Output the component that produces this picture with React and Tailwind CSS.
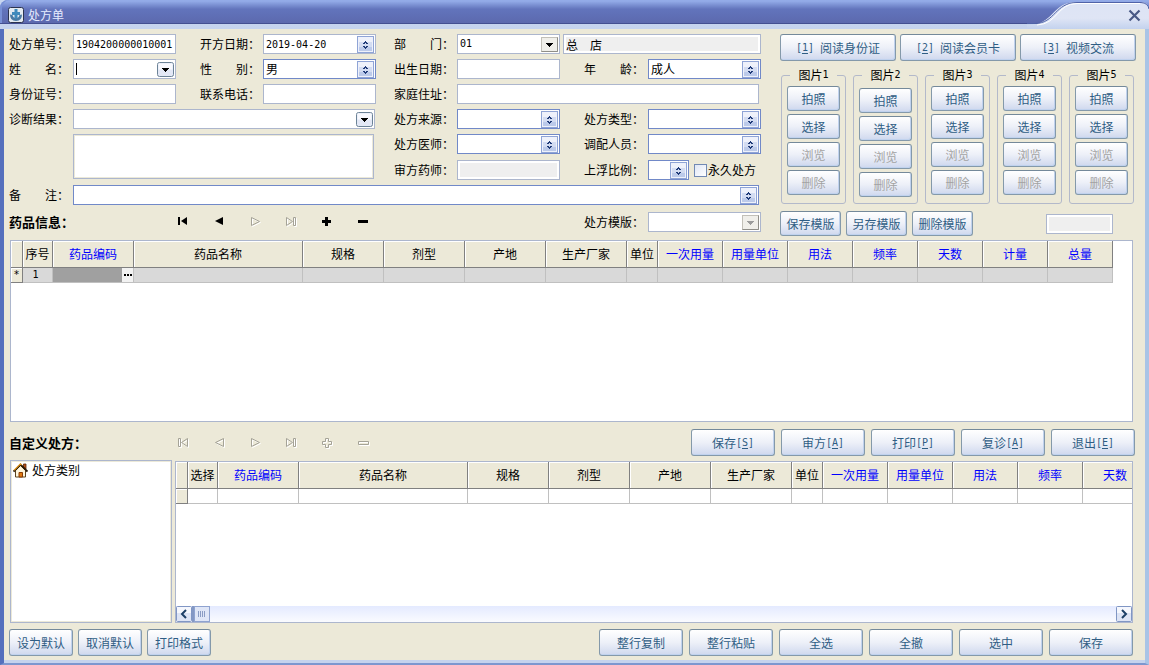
import React from 'react';

const MONO = "font-['DejaVu_Sans_Mono',monospace] text-[10px]";

function Button({ children, className = '', disabled = false }) {
  return (
    <button
      type="button"
      disabled={disabled}
      className={`flex items-center justify-center whitespace-nowrap rounded-[3px] border border-[#8499aa] border-t-[#74899a] bg-linear-to-b from-white via-[#edf0f8] to-[#cfd8ee] leading-none text-[#2f5d84] shadow-[inset_-1px_-1px_0_#c0d2ee] disabled:text-[#a3a3a3] ${className}`}
    >
      {children}
    </button>
  );
}

function Key({ letter, children }) {
  return (
    <span className={MONO}>
      [<u className="underline-offset-2">{letter}</u>]{children}
    </span>
  );
}

function UpDown() {
  return (
    <svg viewBox="0 0 17 17" className="h-[17px] w-[17px]" shapeRendering="crispEdges" aria-hidden="true">
      <rect x="0" y="0" width="17" height="17" fill="#8fa4d6" />
      <rect x="1" y="1" width="15" height="15" fill="#eef1fb" />
      <rect x="2" y="6" width="13" height="9" fill="#d3dcf2" />
      <rect x="2" y="11" width="13" height="4" fill="#bccaea" />
      <path d="M8 5h1v1h1v1h1v1h-2v-1h-1v1h-2v-1h1v-1h1zM6 10h2v1h1v-1h2v1h-1v1h-1v1h-1v-1h-1v-1h-1z" fill="#1f3a78" />
    </svg>
  );
}

function ArrowDown({ kind }) {
  const round = kind === 'round';
  const off = kind === 'disabled';
  return (
    <svg viewBox="0 0 17 15" className="h-[15px] w-[17px]" aria-hidden="true">
      <rect
        x="0.5"
        y="0.5"
        width="16"
        height="14"
        rx={round ? 2 : 0}
        fill={round ? '#e3e8f6' : '#f0efea'}
        stroke={round ? '#6c8397' : '#c2c0b8'}
      />
      {round && <rect x="1.5" y="1.5" width="14" height="6" fill="#f8f9fe" />}
      {!round && <path d="M0.5 14.5h16v-14" fill="none" stroke="#8f8e88" />}
      <path d="M5 6h7v1h-1v1h-1v1h-1v1h-1v-1h-1v-1h-1v-1h-1z" fill={off ? '#9c9c9c' : '#000'} shapeRendering="crispEdges" />
    </svg>
  );
}

function Label({ htmlFor, children, className = '' }) {
  return (
    <label htmlFor={htmlFor} className={`self-center whitespace-pre leading-5 ${className}`}>
      {children}
    </label>
  );
}

function Text({ id, className = '', mono = false, caret = false, icon, ...rest }) {
  return (
    <div className={`flex h-5 min-w-0 items-center border border-[#acb6cd] bg-white pl-[2px] ${className}`}>
      {caret && <span className="h-3 w-px bg-black" />}
      <input
        id={id}
        type="text"
        className={`h-full w-full min-w-0 flex-1 bg-transparent outline-none ${mono ? MONO : ''}`}
        {...rest}
      />
      {icon && (
        <button type="button" aria-label="展开" className="mr-px shrink-0">
          {icon}
        </button>
      )}
    </div>
  );
}

function ReadOnly({ id, value = '', className = '', label }) {
  return (
    <div className={`h-5 border border-[#acb6cd] bg-white p-[2px] ${className}`}>
      <input
        id={id}
        aria-label={label}
        readOnly
        value={value}
        className="block h-full w-full bg-[#efefef] leading-none outline-none"
      />
    </div>
  );
}

function Select({ id, value = '', mono = false, plain = false, disabled = false, icon = <UpDown />, className = '' }) {
  return (
    <div
      className={`grid h-5 min-w-0 items-center border bg-white ${plain ? 'border-[#acb6cd]' : 'border-[#7189c8]'} ${className}`}
    >
      <select
        id={id}
        disabled={disabled}
        defaultValue={value}
        className={`col-start-1 row-start-1 h-full w-full min-w-0 appearance-none bg-transparent pl-[2px] leading-none outline-none ${mono ? MONO : ''}`}
      >
        <option value={value}>{value}</option>
      </select>
      <span className="pointer-events-none col-start-1 row-start-1 mr-px justify-self-end">{icon}</span>
    </div>
  );
}

const NAV = [
  { label: '首条', d: 'M1 1h2v8h-2zM4 5l6 -4v8z' },
  { label: '上一条', d: 'M2 5l8 -4v8z' },
  { label: '下一条', d: 'M2 1l8 4l-8 4z' },
  { label: '末条', d: 'M1 1l6 4l-6 4zM8 1h2v8h-2z' },
  { label: '新增', d: 'M4 1h3v3h3v3h-3v3h-3v-3h-3v-3h3z' },
  { label: '删除', d: 'M1 4h10v3h-10z' },
];

function Navigator({ enabled }) {
  return (
    <div className="flex">
      {NAV.map((item, i) => {
        const on = enabled.includes(i);
        return (
          <button key={item.label} type="button" aria-label={item.label} disabled={!on} className="flex w-9 justify-center py-1">
            <svg viewBox="0 0 13 12" className="h-3 w-[13px]" aria-hidden="true">
              {on ? (
                <path d={item.d} fill="#000" />
              ) : (
                <>
                  <path d={item.d} transform="translate(1.5 1.5)" fill="none" stroke="#fff" />
                  <path d={item.d} transform="translate(0.5 0.5)" fill="none" stroke="#a5a397" />
                </>
              )}
            </svg>
          </button>
        );
      })}
    </div>
  );
}

const DRUG_COLUMNS = [
  ['药品编码', 'w-[81px]', true],
  ['药品名称', 'w-[169px]', false],
  ['规格', 'w-[81px]', false],
  ['剂型', 'w-[81px]', false],
  ['产地', 'w-[81px]', false],
  ['生产厂家', 'w-[81px]', false],
  ['单位', 'w-[31px]', false],
  ['一次用量', 'w-[65px]', true],
  ['用量单位', 'w-[65px]', true],
  ['用法', 'w-[65px]', true],
  ['频率', 'w-[65px]', true],
  ['天数', 'w-[65px]', true],
];
const MAIN_COLUMNS = [['序号', 'w-[30px]', false], ...DRUG_COLUMNS, ['计量', 'w-[65px]', true], ['总量', 'w-[65px]', true]];
const CUSTOM_COLUMNS = [['选择', 'w-[30px]', false], ...DRUG_COLUMNS];

const HEAD = 'h-[27px] overflow-hidden whitespace-nowrap border-b border-r border-[#808080] bg-[#ece9d8] p-0 text-center font-normal shadow-[inset_1px_1px_0_#fff]';

function HeadRow({ columns }) {
  return (
    <thead>
      <tr>
        <th className={`w-3 ${HEAD}`} aria-label="行标" />
        {columns.map(([name, width, editable]) => (
          <th key={name} scope="col" className={`${width} ${HEAD} ${editable ? 'text-[#0000ff]' : 'text-black'}`}>
            {name}
          </th>
        ))}
      </tr>
    </thead>
  );
}

const MARK = 'h-[15px] border-b border-r border-[#808080] bg-[#ece9d8] p-0 text-center leading-none shadow-[inset_1px_1px_0_#fff]';

function MainTable() {
  return (
    <table className="w-0 table-fixed border-separate border-spacing-0">
      <HeadRow columns={MAIN_COLUMNS} />
      <tbody>
        <tr>
          <td className={`${MARK} ${MONO}`}>*</td>
          {MAIN_COLUMNS.map(([name], i) => (
            <td
              key={name}
              className={`h-[15px] border-b border-r border-[#c0c0c0] p-0 leading-none ${i === 1 ? 'bg-[#a0a0a0]' : 'bg-[#d9d9d9]'}`}
            >
              {i === 0 && <span className={`block pr-1 text-center ${MONO}`}>1</span>}
              {i === 1 && (
                <button type="button" aria-label="选择药品" className="ml-auto flex h-[14px] w-[11px] items-center justify-center bg-[#f2f2f2]">
                  <svg viewBox="0 0 8 2" className="h-[2px] w-2" aria-hidden="true">
                    <path d="M0 0h2v2h-2zM3 0h2v2h-2zM6 0h2v2h-2z" fill="#000" />
                  </svg>
                </button>
              )}
            </td>
          ))}
        </tr>
      </tbody>
    </table>
  );
}

function CustomTable() {
  return (
    <table className="w-0 table-fixed border-separate border-spacing-0">
      <HeadRow columns={CUSTOM_COLUMNS} />
      <tbody>
        <tr>
          <td className={MARK} />
          {CUSTOM_COLUMNS.map(([name]) => (
            <td key={name} className="h-[15px] border-b border-r border-[#c0c0c0] bg-white p-0" />
          ))}
        </tr>
      </tbody>
    </table>
  );
}

function ScrollButton({ label, d }) {
  return (
    <button type="button" aria-label={label} className="size-4 shrink-0">
      <svg viewBox="0 0 16 16" className="size-4" aria-hidden="true">
        <rect x="0.5" y="0.5" width="15" height="15" rx="1" fill="#dde4f5" stroke="#8096c4" />
        <rect x="1" y="1" width="14" height="6" fill="#f5f7fd" />
        <path d={d} fill="none" stroke="#1c3f66" strokeWidth="2" />
      </svg>
    </button>
  );
}

function ScrollBar() {
  return (
    <div className="flex h-4 bg-linear-to-b from-[#e4eaff] to-[#fafbff]">
      <ScrollButton label="向左滚动" d="M10 4l-4 4l4 4" />
      <span className="w-[2px] bg-[#8398c4]" />
      <svg viewBox="0 0 16 16" className="size-4" aria-hidden="true">
        <rect x="0.5" y="0.5" width="15" height="15" fill="#dfe6f7" stroke="#8fa3d0" />
        <path d="M4.5 5v6M6.5 5v6M8.5 5v6M10.5 5v6" stroke="#8a9cc4" />
      </svg>
      <span className="flex-1" />
      <ScrollButton label="向右滚动" d="M6 4l4 4l-4 4" />
    </div>
  );
}

function HouseIcon() {
  return (
    <svg viewBox="0 0 15 15" className="size-[15px]" aria-hidden="true">
      <path d="M10.5 1h2.500v5h-2.500z" fill="#b8501a" stroke="#5a2a08" strokeWidth="0.8" />
      <path d="M2.5 7.5L7.5 2.5L12.5 7.5V14H2.5z" fill="#fff6dc" stroke="#5a4420" />
      <path d="M0.5 8.5L7.5 1.500L14.5 8.5" fill="none" stroke="#2a1a08" strokeWidth="1.800" />
      <path d="M1 7.4L7.5 0.9L8.500 2" fill="none" stroke="#f0a020" strokeWidth="1.2" />
      <path d="M6 9.5h3.500V14h-3.500z" fill="#e07810" stroke="#8a3c04" />
    </svg>
  );
}

function TitleBar() {
  return (
    <header className="relative h-[29px] shrink-0 bg-linear-to-b from-[#c9d6f0] to-[#c5d3ee]">
      <div className="flex h-6 items-center gap-1 rounded-tl-lg border-b border-[#434f91] bg-linear-to-b from-[#93abe8] from-5% via-[#6274bc] via-40% to-[#5c69ae] pl-2 pt-[6px] shadow-[inset_2px_0_0_#7890d6]">
        <svg viewBox="0 0 16 16" className="size-4" aria-hidden="true">
          <rect x="0.5" y="0.5" width="15" height="15" rx="2" fill="#e3eaf0" stroke="#2c3450" />
          <path d="M2 7.500q0 6.500 6 6.500t6 -6.500l-2.500 0.500q-0.500 3 -3.500 3t-3.500 -3z" fill="#4a7aa4" />
          <path d="M6.500 2h3v3h2.500v3h-2.500v3.500h-3v-3.500h-2.500v-3h2.500z" fill="#3f8abc" />
        </svg>
        <h1 className="leading-none text-[#e6ecff]">处方单</h1>
      </div>
      <div className="absolute right-0 top-0 flex h-[29px] w-[122px]">
        <svg viewBox="0 0 122 29" className="h-[29px] w-[122px]" aria-hidden="true">
          <defs>
            <linearGradient id="tab" x1="0" y1="0" x2="0" y2="1">
              <stop offset="0" stopColor="#dde4f5" />
              <stop offset="0.6" stopColor="#dfe5f5" />
              <stop offset="1" stopColor="#c3d2ee" />
            </linearGradient>
          </defs>
          <path d="M0 25C28 25 24 2 50 2H114Q121 2 122 9V29H0z" fill="url(#tab)" />
          <path d="M0 23.500H8C28 23.500 28 2.500 50 2.500H114Q121 3 122 9" fill="none" stroke="#5063a8" />
          <path d="M10 25C31 24 30 3.500 50 3.500H113" fill="none" stroke="#fff" />
        </svg>
      </div>
      <button type="button" aria-label="关闭" className="absolute right-2 top-[9px] size-[13px]">
        <svg viewBox="0 0 13 13" className="size-[13px]" aria-hidden="true">
          <path d="M1.500 1.500l10 10M11.500 1.500l-10 10" stroke="#4a5a86" strokeWidth="2.200" />
        </svg>
      </button>
    </header>
  );
}

function PictureGroup({ n }) {
  return (
    <fieldset className={`min-w-0 rounded-[3px] border border-[#b3b9ca] px-[5px] ${n === 2 ? 'pb-[6px] pt-[7px]' : 'pb-2 pt-[5px]'}`}>
      <legend className="mx-auto flex h-3 items-center whitespace-nowrap px-2 leading-3">
        图片<span className={MONO}>{n}</span>
      </legend>
      <div className="flex flex-col gap-[3px]">
        <Button className="h-[25px]">拍照</Button>
        <Button className="h-[25px]">选择</Button>
        <Button className="h-[25px]" disabled>浏览</Button>
        <Button className="h-[25px]" disabled>删除</Button>
      </div>
    </fieldset>
  );
}

function PrescriptionForm() {
  return (
    <form className="grid min-w-0 flex-1 grid-cols-[64px_103fr_87px_113fr_81px_103fr_88px_113fr] grid-rows-[20px_20px_20px_20px_20px_21px_20px] gap-y-[5px]">
      <Label htmlFor="no">处方单号：</Label>
      <Text id="no" mono defaultValue="1904200000010001" />
      <Label htmlFor="date" className="pl-6">开方日期：</Label>
      <Text id="date" mono defaultValue="2019-04-20" icon={<UpDown />} />
      <Label htmlFor="dept" className="pl-[18px]">部　　门：</Label>
      <Select id="dept" value="01" mono plain icon={<ArrowDown />} />
      <ReadOnly label="部门名称" value="总　店" className="col-span-2 ml-[3px]" />

      <Label htmlFor="name">姓　　名：</Label>
      <Text id="name" caret icon={<ArrowDown kind="round" />} />
      <Label htmlFor="sex" className="pl-6">性　　别：</Label>
      <Select id="sex" value="男" />
      <Label htmlFor="birth" className="pl-[18px]">出生日期：</Label>
      <Text id="birth" />
      <Label htmlFor="age" className="pl-6">年　　龄：</Label>
      <Select id="age" value="成人" />

      <Label htmlFor="idcard">身份证号：</Label>
      <Text id="idcard" />
      <Label htmlFor="phone" className="pl-6">联系电话：</Label>
      <Text id="phone" />
      <Label htmlFor="addr" className="pl-[18px]">家庭住址：</Label>
      <Text id="addr" className="col-span-3 mr-[2px]" />

      <Label htmlFor="diag">诊断结果：</Label>
      <Text id="diag" className="col-span-3 mr-px" icon={<ArrowDown kind="round" />} />
      <Label htmlFor="source" className="pl-[18px]">处方来源：</Label>
      <Select id="source" />
      <Label htmlFor="type" className="pl-6">处方类型：</Label>
      <Select id="type" />

      <textarea
        aria-label="诊断说明"
        className="col-span-3 col-start-2 row-span-2 row-start-5 mb-px mr-[2px] resize-none border border-[#acb6cd] bg-white p-1 shadow-[inset_0_0_0_1px_#ece9d8] outline-none"
      />
      <Label htmlFor="doctor" className="col-start-5 row-start-5 pl-[18px]">处方医师：</Label>
      <Select id="doctor" className="col-start-6 row-start-5" />
      <Label htmlFor="dispenser" className="col-start-7 row-start-5 pl-6">调配人员：</Label>
      <Select id="dispenser" className="col-start-8 row-start-5" />

      <Label htmlFor="auditor" className="col-start-5 row-start-6 pl-[18px]">审方药师：</Label>
      <ReadOnly id="auditor" className="col-start-6 row-start-6 self-end" />
      <Label htmlFor="ratio" className="col-start-7 row-start-6 pl-6">上浮比例：</Label>
      <div className="col-start-8 row-start-6 flex items-center self-end">
        <Select id="ratio" className="w-[41px] shrink-0" />
        <label className="ml-[5px] flex items-center gap-px whitespace-nowrap leading-none">
          <input
            type="checkbox"
            className="size-[13px] appearance-none border border-[#7189b4] bg-linear-to-br from-[#dfe6f5] to-white checked:bg-[#4a5a86]"
          />
          永久处方
        </label>
      </div>

      <Label htmlFor="note" className="col-start-1 row-start-7">备　　注：</Label>
      <Select id="note" className="col-span-7 col-start-2 row-start-7 mr-[2px]" />
    </form>
  );
}

export default function App() {
  return (
    <div className="flex min-h-screen flex-col bg-[#6b80c6] font-['Noto_Sans_CJK_SC',sans-serif] text-[12px] text-black">
      <TitleBar />
      <main className="flex flex-1 flex-col border-b-2 border-l-4 border-r-4 border-b-[#7d97cf] border-l-[#5570bd] border-r-[#a9c4e6] bg-[#ece9d8]">
        <div className="flex flex-1 flex-col pt-[5px]">
          <div className="flex gap-[19px] pl-[5px] pr-[9px]">
            <PrescriptionForm />
            <section className="flex w-[356px] shrink-0 flex-col gap-2">
              <div className="grid grid-cols-3 gap-1">
                <Button className="h-[27px]"><Key letter="1">&nbsp;</Key>阅读身份证</Button>
                <Button className="h-[27px]"><Key letter="2">&nbsp;</Key>阅读会员卡</Button>
                <Button className="h-[27px]"><Key letter="3">&nbsp;</Key>视频交流</Button>
              </div>
              <div className="grid grid-cols-5 gap-[7px] pl-px pr-[2px]">
                {[1, 2, 3, 4, 5].map((n) => (
                  <PictureGroup key={n} n={n} />
                ))}
              </div>
            </section>
          </div>

          <div className="mt-[6px] flex gap-[19px] pl-[5px] pr-[9px]">
            <div className="flex min-w-0 flex-1 items-center pb-[3px]">
              <h2 className="w-[156px] text-[13px] font-bold leading-5">药品信息：</h2>
              <Navigator enabled={[0, 1, 4, 5]} />
              <Label htmlFor="tpl" className="ml-auto">处方模版：</Label>
              <Select id="tpl" plain disabled icon={<ArrowDown kind="disabled" />} className="ml-1 w-[113px]" />
            </div>
            <div className="flex w-[356px] shrink-0 items-center gap-[5px]">
              <Button className="h-[25px] w-[61px]">保存模版</Button>
              <Button className="h-[25px] w-[61px]">另存模版</Button>
              <Button className="h-[25px] w-[61px]">删除模版</Button>
              <ReadOnly label="模版编号" className="ml-auto mr-[23px] w-[67px]" />
            </div>
          </div>

          <div className="ml-[6px] mr-3 mt-1 h-[182px] grow overflow-hidden border border-[#acb6cd] bg-white">
            <MainTable />
          </div>

          <div className="mt-[7px] flex items-center pl-[5px] pr-[10px]">
            <h2 className="w-[156px] text-[13px] font-bold leading-5">自定义处方：</h2>
            <Navigator enabled={[]} />
            <div className="ml-auto flex gap-[6px]">
              <Button className="h-[27px] w-[84px]">保存<Key letter="S" /></Button>
              <Button className="h-[27px] w-[84px]">审方<Key letter="A" /></Button>
              <Button className="h-[27px] w-[84px]">打印<Key letter="P" /></Button>
              <Button className="h-[27px] w-[84px]">复诊<Key letter="A" /></Button>
              <Button className="h-[27px] w-[84px]">退出<Key letter="E" /></Button>
            </div>
          </div>

          <div className="ml-[6px] mr-3 mt-1 flex h-[163px] gap-[3px]">
            <ul className="w-[162px] shrink-0 border border-[#acb6cd] bg-white shadow-[inset_0_0_0_1px_#ece9d8]">
              <li className="flex items-center gap-1 pl-[2px] pt-px leading-4">
                <HouseIcon />
                处方类别
              </li>
            </ul>
            <div className="mt-px flex min-w-0 flex-1 flex-col border border-[#acb6cd] bg-white">
              <div className="flex-1 overflow-hidden">
                <CustomTable />
              </div>
              <ScrollBar />
            </div>
          </div>

          <footer className="mb-1 mt-[6px] flex justify-between pl-[5px] pr-3">
            <div className="flex gap-[5px]">
              <Button className="h-[27px] w-16">设为默认</Button>
              <Button className="h-[27px] w-16">取消默认</Button>
              <Button className="h-[27px] w-16">打印格式</Button>
            </div>
            <div className="flex gap-[6px]">
              <Button className="h-[27px] w-[84px]">整行复制</Button>
              <Button className="h-[27px] w-[84px]">整行粘贴</Button>
              <Button className="h-[27px] w-[84px]">全选</Button>
              <Button className="h-[27px] w-[84px]">全撤</Button>
              <Button className="h-[27px] w-[84px]">选中</Button>
              <Button className="h-[27px] w-[84px]">保存</Button>
            </div>
          </footer>
          <div className="h-[3px] bg-[#c5d3ee]" />
        </div>
      </main>
    </div>
  );
}
